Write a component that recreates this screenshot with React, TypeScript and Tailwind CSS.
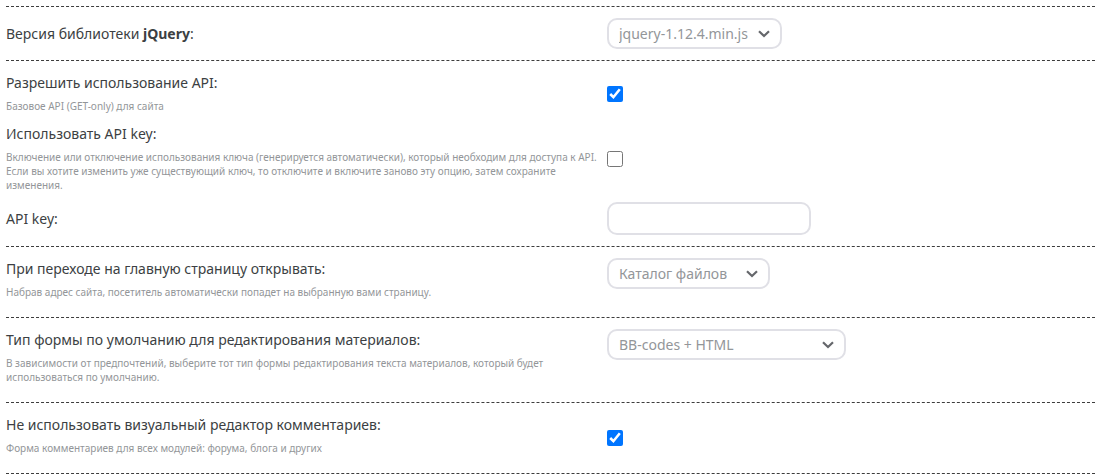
import { useId, useState } from "react";
import type { ReactNode } from "react";

function Section({ children }: { children: ReactNode }) {
  return (
    <section className="flex flex-col gap-[7px] border-b border-dashed border-[#3d3d3d] py-[11px]">
      {children}
    </section>
  );
}

type RowProps = {
  id: string;
  label: ReactNode;
  hint?: string;
  grouped?: boolean;
  alignTop?: boolean;
  children: ReactNode;
};

function Row({ id, label, hint, grouped, alignTop, children }: RowProps) {
  return (
    <div
      className={`grid grid-cols-[591fr_488fr] gap-x-[10px] ${alignTop ? "items-start" : "items-center"}`}
    >
      <div className={hint ? (grouped ? "pb-[3px]" : "pb-[7px]") : ""}>
        <label htmlFor={id} className="block text-[14px] leading-[22px] text-[#3c3f43]">
          {label}
        </label>
        {hint && (
          <p id={`${id}-hint`} className="mt-[5px] text-[10px] leading-[14px] text-[#939699]">
            {hint}
          </p>
        )}
      </div>
      <div className="flex">{children}</div>
    </div>
  );
}

function Select({ id, options, width }: { id: string; options: string[]; width: string }) {
  return (
    <div className={`relative ${width}`}>
      <select
        id={id}
        className="block h-[31px] w-full appearance-none rounded-[10px] border-2 border-[#e0e0e6] bg-white pl-[10px] text-[14px] text-[#939699] outline-none focus:border-[#b9bcc6]"
      >
        {options.map((option) => (
          <option key={option}>{option}</option>
        ))}
      </select>
      <svg
        viewBox="0 0 12 8"
        className="pointer-events-none absolute top-[12px] right-[12px] h-2 w-3"
        fill="none"
        stroke="#65676b"
        strokeWidth="2.2"
        aria-hidden="true"
      >
        <path d="M1 1.2 6 6l5-4.8" />
      </svg>
    </div>
  );
}

function Checkbox({ id, initial = false }: { id: string; initial?: boolean }) {
  const [checked, setChecked] = useState(initial);
  return (
    <input
      id={id}
      type="checkbox"
      checked={checked}
      onChange={(event) => setChecked(event.target.checked)}
      className="block size-4 accent-[#0075ff]"
    />
  );
}

export default function App() {
  const id = useId();
  return (
    <form className="bg-white pt-[6px] pr-[25px] pl-[6px] font-['Noto_Sans','Open_Sans',sans-serif]">
      <div className="border-t border-dashed border-[#3d3d3d]">
        <Section>
          <Row
            id={`${id}-jquery`}
            label={
              <>
                Версия библиотеки <b>jQuery</b>:
              </>
            }
          >
            <Select id={`${id}-jquery`} options={["jquery-1.12.4.min.js"]} width="w-[175px]" />
          </Row>
        </Section>

        <Section>
          <Row
            id={`${id}-api`}
            label="Разрешить использование API:"
            hint="Базовое API (GET-only) для сайта"
            grouped
          >
            <Checkbox id={`${id}-api`} initial />
          </Row>
          <Row
            id={`${id}-use-key`}
            label="Использовать API key:"
            hint="Включение или отключение использования ключа (генерируется автоматически), который необходим для доступа к API. Если вы хотите изменить уже существующий ключ, то отключите и включите заново эту опцию, затем сохраните изменения."
            grouped
          >
            <Checkbox id={`${id}-use-key`} />
          </Row>
          <Row id={`${id}-key`} label="API key:">
            <input
              id={`${id}-key`}
              type="text"
              className="h-[33px] w-[204px] rounded-[10px] border-2 border-[#e0e0e6] bg-white px-[10px] text-[14px] text-[#939699] outline-none focus:border-[#b9bcc6]"
            />
          </Row>
        </Section>

        <Section>
          <Row
            id={`${id}-home`}
            label="При переходе на главную страницу открывать:"
            hint="Набрав адрес сайта, посетитель автоматически попадет на выбранную вами страницу."
            alignTop
          >
            <Select id={`${id}-home`} options={["Каталог файлов"]} width="w-[163px]" />
          </Row>
        </Section>

        <Section>
          <Row
            id={`${id}-editor`}
            label="Тип формы по умолчанию для редактирования материалов:"
            hint="В зависимости от предпочтений, выберите тот тип формы редактирования текста материалов, который будет использоваться по умолчанию."
            alignTop
          >
            <Select id={`${id}-editor`} options={["BB-codes + HTML"]} width="w-[239px]" />
          </Row>
        </Section>

        <Section>
          <Row
            id={`${id}-comments`}
            label="Не использовать визуальный редактор комментариев:"
            hint="Форма комментариев для всех модулей: форума, блога и других"
          >
            <Checkbox id={`${id}-comments`} initial />
          </Row>
        </Section>
      </div>
    </form>
  );
}
